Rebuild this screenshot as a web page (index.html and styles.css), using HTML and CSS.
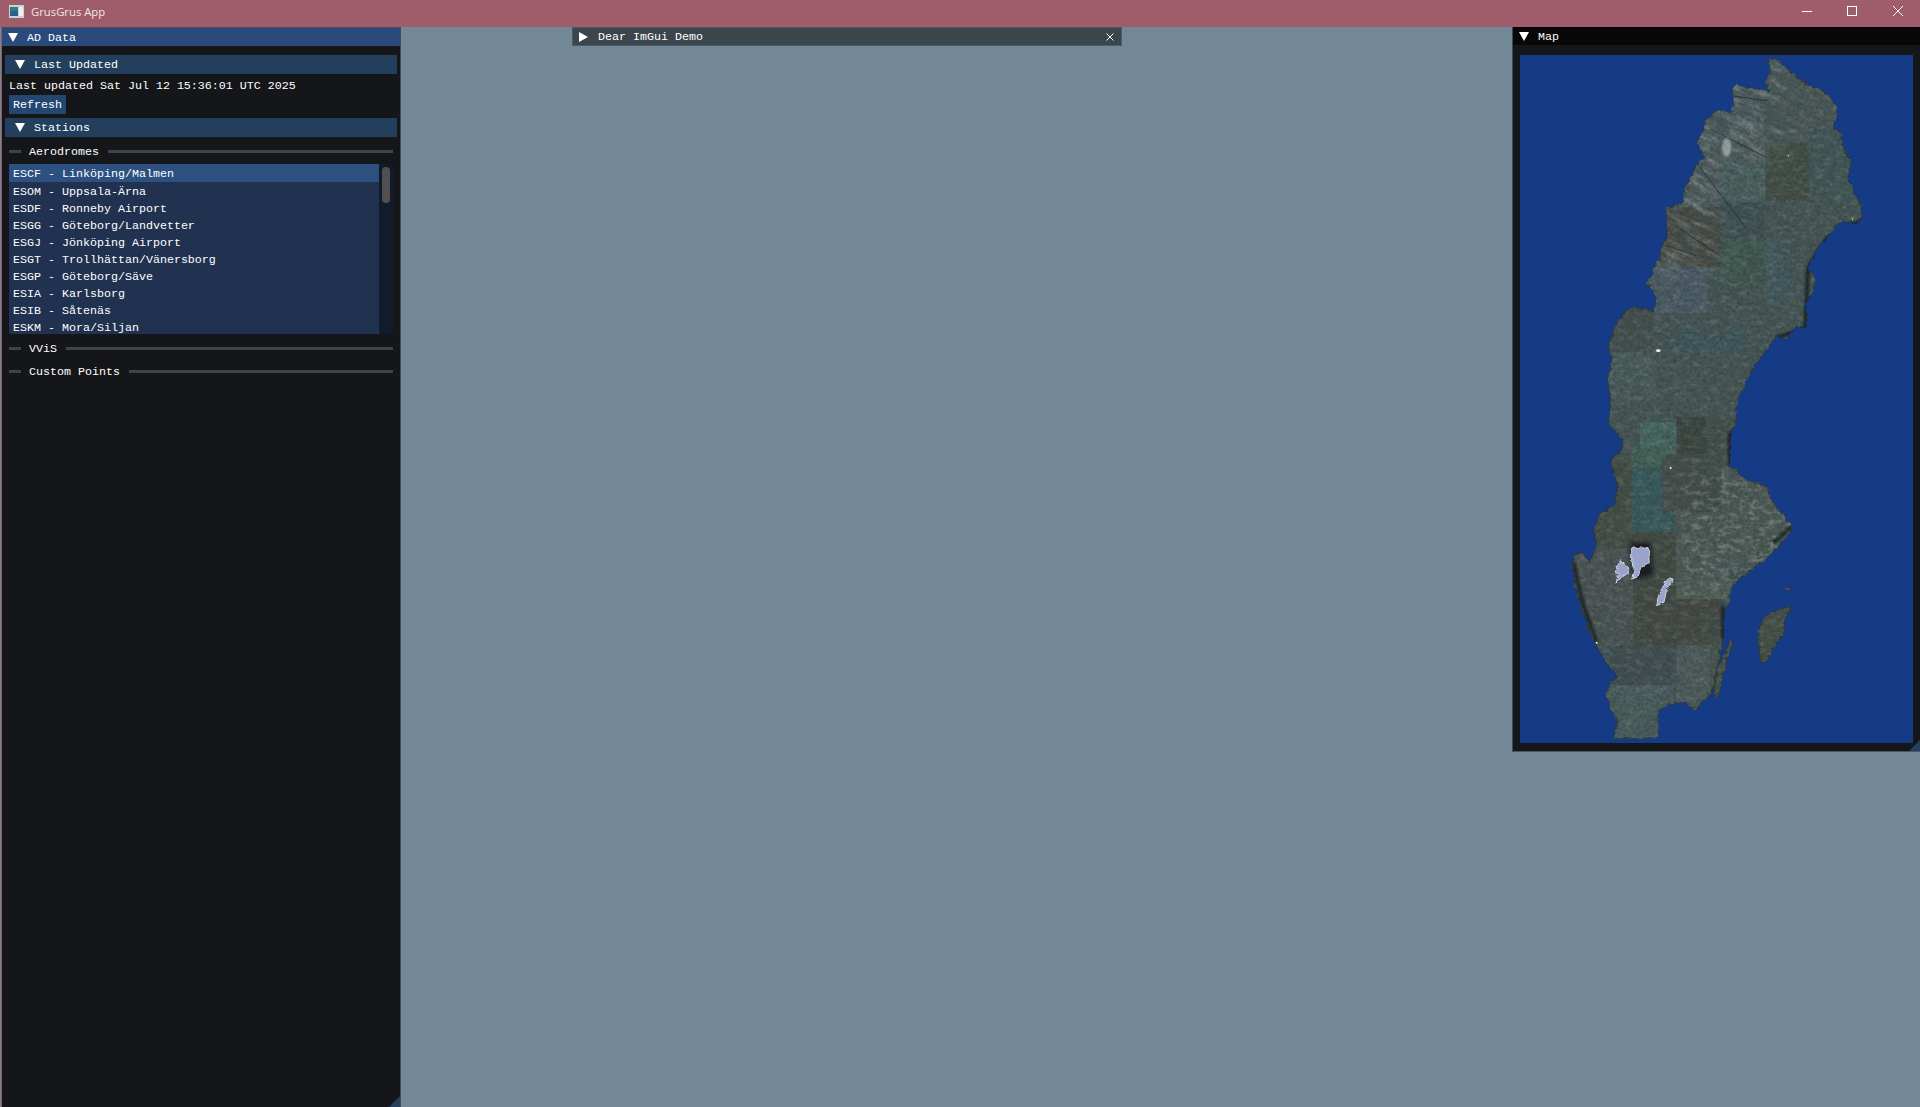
FILE: index.html
```html
<!DOCTYPE html>
<html lang="en">
<head>
<meta charset="utf-8">
<title>GrusGrus App</title>
<link rel="stylesheet" href="styles.css">
</head>
<body>
<div class="app">
  <header class="titlebar">
    <svg class="app-icon" viewBox="0 0 15 13"><rect width="15" height="13" fill="#c9d3d6"/><rect x="1" y="2" width="8" height="9" fill="#2f7d78"/><rect x="1" y="6" width="8" height="5" fill="#2b5f8f"/><rect x="10" y="2" width="4" height="9" fill="#eef1f1"/></svg>
    <span class="app-name">GrusGrus App</span>
    <div class="win-controls">
      <svg class="ctl" viewBox="0 0 46 27"><path d="M20 11.5H30" stroke="#fff" fill="none"/></svg>
      <svg class="ctl" viewBox="0 0 46 27"><rect x="19.5" y="6.5" width="9" height="9" stroke="#fff" fill="none"/></svg>
      <svg class="ctl" viewBox="0 0 46 27"><path d="M19 6L29 16M29 6L19 16" stroke="#fff" fill="none"/></svg>
    </div>
  </header>
  <main class="desktop">
    <section class="window ad-window">
      <div class="win-title ad-title"><svg class="tri" viewBox="0 0 10 9"><path d="M0 0H10L5 9Z"/></svg><span>AD Data</span></div>
      <div class="pane">
        <div class="section-head"><svg class="tri" viewBox="0 0 10 9"><path d="M0 0H10L5 9Z"/></svg><span>Last Updated</span></div>
        <p class="line">Last updated Sat Jul 12 15:36:01 UTC 2025</p>
        <button class="btn">Refresh</button>
        <div class="section-head stations"><svg class="tri" viewBox="0 0 10 9"><path d="M0 0H10L5 9Z"/></svg><span>Stations</span></div>
        <div class="sep first"><i class="rule short"></i><span>Aerodromes</span><i class="rule"></i></div>
        <div class="listbox">
          <ul class="items">
            <li class="selected">ESCF - Linköping/Malmen</li>
            <li>ESOM - Uppsala-Ärna</li>
            <li>ESDF - Ronneby Airport</li>
            <li>ESGG - Göteborg/Landvetter</li>
            <li>ESGJ - Jönköping Airport</li>
            <li>ESGT - Trollhättan/Vänersborg</li>
            <li>ESGP - Göteborg/Säve</li>
            <li>ESIA - Karlsborg</li>
            <li>ESIB - Såtenäs</li>
            <li>ESKM - Mora/Siljan</li>
          </ul>
          <div class="scrollbar"><div class="thumb"></div></div>
        </div>
        <div class="sep viis"><i class="rule short"></i><span>VViS</span><i class="rule"></i></div>
        <div class="sep custom"><i class="rule short"></i><span>Custom Points</span><i class="rule"></i></div>
      </div>
      <div class="grip"></div>
    </section>

    <section class="window demo-window">
      <svg class="tri-r" viewBox="0 0 9 10"><path d="M0 0L9 5L0 10Z"/></svg>
      <span class="demo-name">Dear ImGui Demo</span>
      <svg class="demo-close" viewBox="0 0 8 8"><path d="M.5 .5L7.5 7.5M7.5 .5L.5 7.5"/></svg>
    </section>

    <section class="window map-window">
      <div class="win-title map-title"><svg class="tri" viewBox="0 0 10 9"><path d="M0 0H10L5 9Z"/></svg><span>Map</span></div>
      <div class="map-body">
        <svg class="map" viewBox="30 48 1179 2064" role="img" aria-label="Satellite map of Sweden">
          <defs>
            <path id="landshape" d="M770 60L795 55L815 68L840 95L880 130L935 150L965 180L982 205L975 270L1000 280L995 310L1025 365L1015 420L1035 465L1050 490L1060 540L1030 555L1000 545L965 580L950 600L935 610L910 650L895 685L920 725L905 770L885 800L895 830L885 870L860 860L835 900L800 895L770 935L730 990L690 1075L680 1110L680 1150L665 1180L660 1280L680 1295L710 1320L770 1340L790 1390L845 1460L830 1500L770 1560L690 1620L665 1650L660 1690L645 1720L640 1800L630 1860L620 1900L610 1960L580 1990L560 2015L530 1995L480 1995L445 2020L445 2095L400 2100L310 2100L320 2050L300 2010L285 1960L295 1935L320 1915L280 1860L240 1790L210 1700L190 1620L185 1570L200 1540L225 1540L240 1570L255 1520L250 1470L265 1425L310 1400L320 1340L300 1260L335 1230L335 1200L295 1155L300 1080L292 1020L305 960L293 925L310 870L345 815L385 805L430 815L440 780L410 730L445 660L470 590L468 505L520 490L520 450L560 380L580 350L560 310L590 240L625 210L660 220L672 185L665 145L680 135L770 155L765 130L780 95Z M830 1702L845 1705L825 1740L820 1785L790 1830L770 1870L750 1870L745 1810L745 1770L765 1730L790 1715Z M822 1642L840 1648L842 1655L825 1655Z M660 1800L672 1805L650 1870L625 1980L612 1975L615 1910L640 1850Z"/>
            <filter id="jag" x="-5%" y="-5%" width="110%" height="110%">
              <feTurbulence type="fractalNoise" baseFrequency="0.06" numOctaves="3" seed="4" result="n"/>
              <feDisplacementMap in="SourceGraphic" in2="n" scale="18" xChannelSelector="R" yChannelSelector="G"/>
            </filter>
            <filter id="jag2" x="-10%" y="-10%" width="120%" height="120%">
              <feTurbulence type="fractalNoise" baseFrequency="0.09" numOctaves="2" seed="9" result="n"/>
              <feDisplacementMap in="SourceGraphic" in2="n" scale="12" xChannelSelector="R" yChannelSelector="G"/>
            </filter>
            <filter id="soft"><feGaussianBlur stdDeviation="7"/></filter>
            <filter id="soft2"><feGaussianBlur stdDeviation="2.5"/></filter>
            <filter id="soft3" x="-20%" y="-20%" width="140%" height="140%"><feGaussianBlur stdDeviation="35"/></filter>
            <mask id="land" maskUnits="userSpaceOnUse" x="30" y="48" width="1179" height="2064">
              <use href="#landshape" class="mask-fill" filter="url(#jag)"/>
            </mask>
            <mask id="nw" maskUnits="userSpaceOnUse" x="30" y="48" width="1179" height="2064">
              <path class="mask-fill" d="M450 60H810V360L640 380V700H420V620Z" filter="url(#soft3)"/>
            </mask>
            <mask id="mid" maskUnits="userSpaceOnUse" x="30" y="48" width="1179" height="2064">
              <path class="mask-fill" d="M520 1300H880V1660H520Z" filter="url(#soft3)"/>
            </mask>
            <filter id="grain" x="0" y="0" width="100%" height="100%">
              <feTurbulence type="fractalNoise" baseFrequency="0.22" numOctaves="3" seed="7"/>
              <feColorMatrix type="matrix" values="0 0 0 0 1  0 0 0 0 1  0 0 0 0 1  1.1 0 0 0 -0.42"/>
            </filter>
            <filter id="grain-dark" x="0" y="0" width="100%" height="100%">
              <feTurbulence type="fractalNoise" baseFrequency="0.1" numOctaves="3" seed="21"/>
              <feColorMatrix type="matrix" values="0 0 0 0 0  0 0 0 0 .03  0 0 0 0 .05  1.5 0 0 0 -0.55"/>
            </filter>
            <filter id="ridge" x="0" y="0" width="100%" height="100%">
              <feTurbulence type="fractalNoise" baseFrequency="0.012 0.05" numOctaves="3" seed="11"/>
              <feColorMatrix type="matrix" values="0 0 0 0 .82  0 0 0 0 .85  0 0 0 0 .85  3 0 0 0 -1.4"/>
            </filter>
            <filter id="ridge-dark" x="0" y="0" width="100%" height="100%">
              <feTurbulence type="fractalNoise" baseFrequency="0.01 0.045" numOctaves="3" seed="29"/>
              <feColorMatrix type="matrix" values="0 0 0 0 .04  0 0 0 0 .08  0 0 0 0 .1  3 0 0 0 -1.35"/>
            </filter>
            <filter id="mottle" x="0" y="0" width="100%" height="100%">
              <feTurbulence type="fractalNoise" baseFrequency="0.035 0.07" numOctaves="4" seed="3"/>
              <feColorMatrix type="matrix" values="0 0 0 0 .78  0 0 0 0 .8  0 0 0 0 .76  2.6 0 0 0 -1.2"/>
            </filter>
            <filter id="blotch" x="0" y="0" width="100%" height="100%">
              <feTurbulence type="fractalNoise" baseFrequency="0.02 0.03" numOctaves="4" seed="15"/>
              <feColorMatrix type="matrix" values="0 0 0 0 .05  0 0 0 0 .07  0 0 0 0 .07  2.4 0 0 0 -1"/>
            </filter>
          </defs>
          <rect class="sea" x="30" y="48" width="1179" height="2064"/>
          <g mask="url(#land)">
            <rect x="30" y="48" width="1179" height="2064" fill="#445658"/>
            <rect x="760" y="60" width="230" height="250" fill="#4b5a5a"/>
            <rect x="460" y="130" width="305" height="375" fill="#505e62"/>
            <rect x="767" y="312" width="130" height="173" fill="#404c44"/>
            <rect x="897" y="270" width="140" height="215" fill="#3f5759"/>
            <rect x="632" y="378" width="133" height="112" fill="#4a6464"/>
            <rect x="445" y="505" width="187" height="178" fill="#47463f"/>
            <rect x="632" y="490" width="133" height="110" fill="#3c5056"/>
            <rect x="632" y="600" width="133" height="150" fill="#3e5a52"/>
            <rect x="765" y="600" width="75" height="190" fill="#405c64"/>
            <rect x="410" y="683" width="180" height="140" fill="#4c5e6e"/>
            <rect x="500" y="880" width="195" height="55" fill="#3a5860"/>
            <rect x="290" y="810" width="140" height="130" fill="#434d4e"/>
            <rect x="290" y="940" width="150" height="140" fill="#4a5f60"/>
            <rect x="390" y="1150" width="108" height="95" fill="#467068"/>
            <rect x="365" y="1220" width="92" height="65" fill="#40665c"/>
            <rect x="365" y="1285" width="92" height="195" fill="#325c62"/>
            <rect x="457" y="1420" width="38" height="60" fill="#325c62"/>
            <rect x="457" y="1245" width="178" height="175" fill="#434c4a"/>
            <rect x="500" y="1135" width="90" height="110" fill="#373f3a"/>
            <rect x="590" y="1135" width="90" height="110" fill="#434e49"/>
            <rect x="635" y="1285" width="230" height="310" fill="#4d5c59"/>
            <rect x="498" y="1420" width="137" height="220" fill="#4e5b5a"/>
            <rect x="498" y="1620" width="170" height="60" fill="#53625b"/>
            <rect x="240" y="1260" width="125" height="280" fill="#424b43"/>
            <rect x="365" y="1480" width="133" height="200" fill="#3f473e"/>
            <rect x="180" y="1530" width="190" height="290" fill="#4c5456"/>
            <rect x="370" y="1680" width="270" height="138" fill="#424540"/>
            <rect x="300" y="1818" width="200" height="120" fill="#3f4b53"/>
            <rect x="500" y="1818" width="140" height="175" fill="#505e60"/>
            <rect x="270" y="1938" width="220" height="170" fill="#4a6062"/>
            <rect x="730" y="1640" width="130" height="240" fill="#464e45"/>
            <rect x="600" y="1790" width="80" height="200" fill="#47534c"/>
            <rect class="blotch" x="30" y="48" width="1179" height="2064" filter="url(#blotch)"/>
            <rect class="mottle-all" x="30" y="48" width="1179" height="2064" filter="url(#mottle)"/>
            <g mask="url(#nw)">
              <rect class="ridge-dark" x="-400" y="-300" width="1900" height="1500" transform="rotate(28 600 400)" filter="url(#ridge-dark)"/>
              <rect class="ridge" x="-400" y="-300" width="1900" height="1500" transform="rotate(28 600 400)" filter="url(#ridge)"/>
            </g>
            <g mask="url(#mid)"><rect class="mottle" x="400" y="1200" width="560" height="540" filter="url(#mottle)"/></g>
            <rect class="grain-dark" x="30" y="48" width="1179" height="2064" filter="url(#grain-dark)"/>
            <rect class="grain-light" x="30" y="48" width="1179" height="2064" filter="url(#grain)"/>
            <rect class="tone" x="30" y="48" width="1179" height="2064"/>
            <g class="rivers">
              <path d="M600 270L770 355M570 385L710 570M510 570L630 650M660 170L770 185M470 620L560 650"/>
            </g>
            <g class="clouds" filter="url(#soft2)">
              <ellipse cx="650" cy="325" rx="14" ry="28"/>
            </g>
            <path class="east-shade" d="M1060 540L950 600L895 685L885 870L800 895M660 1180V1280M640 1700V1800M190 1570L220 1700L260 1810M850 1460L790 1510" filter="url(#soft2)"/>
            <path class="shore-dark" d="M360 1510L420 1510L430 1610L370 1620Z" filter="url(#soft)"/>
            <use href="#landshape" class="coast" filter="url(#jag)"/>
          </g>
          <g class="lakes" filter="url(#jag2)">
            <path d="M365 1527L415 1527L418 1570L395 1585L385 1610L365 1620L372 1590L365 1570Z"/>
            <path d="M475 1617L490 1620L470 1650L462 1690L440 1700L445 1670L455 1650Z"/>
            <path d="M330 1565L355 1585L358 1600L335 1615L318 1632L325 1605L315 1600Z"/>
          </g>
          <g class="specks">
            <ellipse cx="445" cy="935" rx="7" ry="4"/><circle cx="482" cy="1287" r="3"/><circle cx="260" cy="1811" r="3"/><circle cx="1028" cy="540" r="2"/><circle cx="835" cy="350" r="2"/>
          </g>
        </svg>
      </div>
      <div class="grip"></div>
    </section>
  </main>
</div>
</body>
</html>
```

FILE: styles.css
```css
* { box-sizing: border-box; }
html, body { margin: 0; height: 100%; overflow: hidden; }
body { background: #728896; }

.app { display: flex; flex-direction: column; height: 1107px; }

.titlebar {
  flex: 0 0 27px;
  height: 27px;
  display: flex;
  align-items: flex-start;
  background: #9f5c6b;
  color: #f0e6e8;
  font: 11.3px/23px "Open Sans", "Noto Sans", sans-serif;
}
.app-icon { width: 15px; height: 13px; margin: 5px 7px 0 9px; }
.win-controls { margin-left: auto; display: flex; }
.ctl { width: 46px; height: 27px; display: block; }

.desktop { position: relative; flex: 1; background: #728896; }

.window {
  position: absolute;
  color: #fff;
  font: 11.67px/17px "Liberation Mono", monospace;
}
.ad-window {
  left: 1px; top: 0; width: 400px; height: 1080px;
  background: #141619;
  border: 1px solid #494b55;
  border-bottom: 0;
  border-left: 1px solid #8d5a6a;
}
.win-title { height: 18px; display: flex; align-items: center; padding-top: 2px; }
.ad-title { background: #2a4a7c; padding-left: 6px; }
.tri { width: 10px; height: 9px; fill: #fff; flex: none; margin-right: 9px; margin-bottom: 2px; }

.pane { padding: 9px 3px 0 3px; }
.section-head {
  height: 19px;
  display: flex;
  align-items: center;
  background: #233f5e;
  padding: 2px 0 0 10px;
}
.line { margin: 2px 0 0 4px; height: 19px; line-height: 20px; }
.btn {
  display: block;
  margin: 0 0 0 4px;
  width: 57px; height: 19px;
  padding: 2px 0 0 4px;
  border: 0;
  background: #234770;
  color: #fff;
  font: inherit;
  text-align: left;
}
.stations { margin-top: 4px; }

.sep { display: flex; align-items: center; height: 17px; margin-left: 4px; margin-right: 4px; padding-top: 2px; }
.sep span { margin: 1px 9px 0 8px; }
.rule { flex: 1; height: 3px; background: #42424f; display: block; }
.rule.short { flex: 0 0 12px; }
.first { margin-top: 5px; }
.viis { margin-top: 5px; }
.custom { margin-top: 6px; }

.listbox {
  display: flex;
  height: 170px;
  margin: 5px 4px 0;
  background: #101b2c;
  overflow: hidden;
}
.items {
  list-style: none;
  margin: 0; padding: 0;
  width: 370px;
  background: #203250;
}
.items li { height: 17px; padding: 2px 0 0 4px; line-height: 17px; }
.items li.selected { height: 18px; background: #2c5080; }
.scrollbar { flex: 1; padding: 3px; }
.thumb { width: 8px; height: 36px; border-radius: 4px; background: #505052; }

.demo-window {
  left: 572px; top: 0; width: 550px; height: 19px;
  display: flex; align-items: center;
  background: #3a464c;
  border: 1px solid #4a5a66;
  padding: 2px 0 0 6px;
}
.tri-r { width: 9px; height: 10px; fill: #fff; margin: 0 10px 2px 0; }
.demo-close { width: 8px; height: 8px; margin: 0 7px 2px auto; fill: none; stroke: #fff; stroke-width: 1; }

.map-window {
  left: 1512px; top: 0; width: 408px; height: 725px;
  background: #141619;
  border-left: 1px solid #3e4a52;
  border-bottom: 1px solid #4a555e;
}
.map-title { background: #080808; padding-left: 6px; }
.map-body { padding: 10px 7px 0 7px; }
.map { display: block; width: 393px; height: 688px; }

.sea { fill: #153a86; }
.mask-fill { fill: #fff; }
.ridge { opacity: .32; }
.ridge-dark { opacity: .5; }
.mottle { opacity: .28; }
.mottle-all { opacity: .16; }
.blotch { opacity: .4; }
.grain-dark { opacity: .55; }
.grain-light { opacity: .1; }
.tone { fill: #55503f; opacity: .2; }
.rivers path { fill: none; stroke: #14222c; stroke-width: 3; opacity: .6; }
.clouds ellipse { fill: #d5dbda; opacity: .5; }
.east-shade { fill: none; stroke: #0d1418; stroke-width: 11; opacity: .75; }
.shore-dark { fill: #0c1012; opacity: .75; }
.coast { fill: none; stroke: #1a2026; stroke-width: 5; opacity: .55; }
.lakes path { fill: #9aa3cc; stroke: #dfe2ee; stroke-width: 2.5; stroke-linejoin: round; }
.specks ellipse, .specks circle { fill: #f2f4f4; }

.grip {
  position: absolute;
  right: 0; bottom: 0;
  width: 0; height: 0;
  border-left: 11px solid transparent;
  border-bottom: 11px solid #263f5c;
}
```
